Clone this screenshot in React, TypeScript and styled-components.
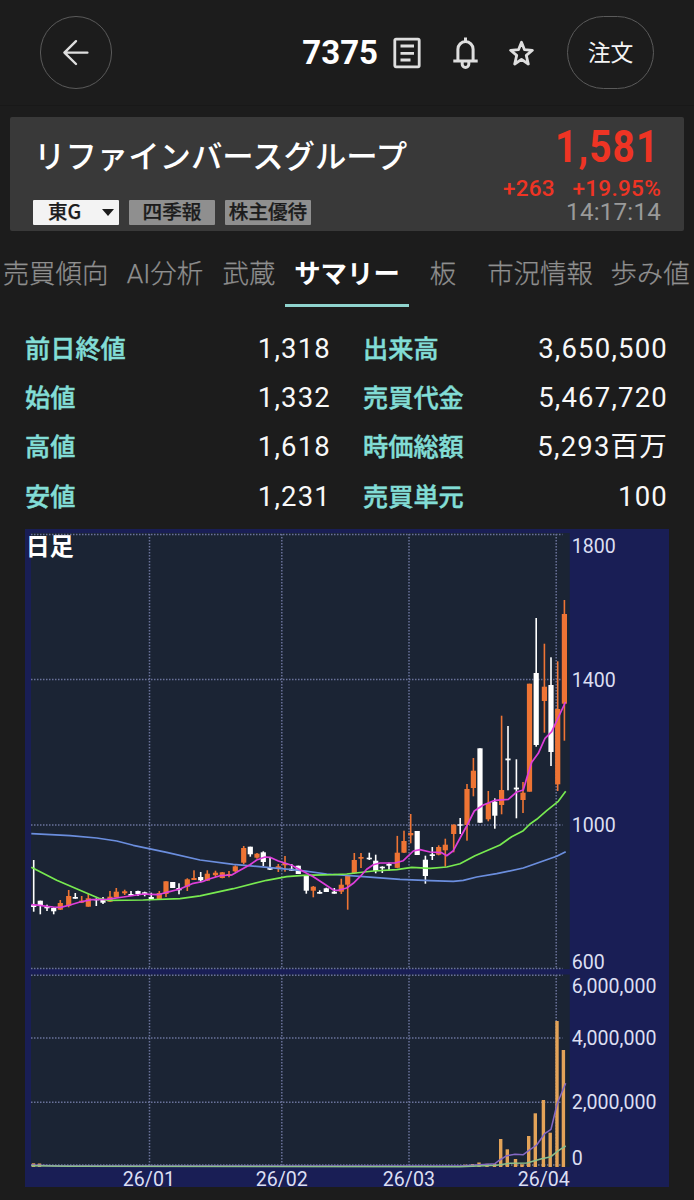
import React from "react";
import styled, { createGlobalStyle } from "styled-components";

const Global = createGlobalStyle`
  * { box-sizing: border-box; }
  body {
    margin: 0;
    background: #1c1c1c;
    color: #fff;
    font-family: Roboto, "Noto Sans CJK JP", sans-serif;
    overflow: hidden;
  }
`;

const Page = styled.main`
  width: 694px;
  height: 1200px;
  overflow: hidden;
  background: #1c1c1c;
`;

const Header = styled.header`
  display: flex;
  align-items: center;
  height: 106px;
  padding: 0 40px;
  border-bottom: 1px solid #181818;
`;

const RoundButton = styled.button<{ $w: number; $drop?: number }>`
  display: flex;
  align-items: center;
  justify-content: center;
  width: ${(p) => p.$w}px;
  height: 73px;
  padding: ${(p) => p.$drop ?? 0}px 0 0;
  border: 1px solid #5a5a5a;
  border-radius: 37px;
  background: transparent;
  color: #f4f4f4;
  font: 400 22.8px/1 Roboto, "Noto Sans CJK JP", sans-serif;
`;

const Code = styled.h1`
  margin: 0 15px 0 auto;
  font: 700 33px/40px Roboto, sans-serif;
`;

const Icon = styled.svg<{ $gap: number }>`
  display: block;
  flex: none;
  margin-right: ${(p) => p.$gap}px;
  fill: none;
  stroke: #dedede;
  stroke-linejoin: round;
`;

const Card = styled.section`
  display: flex;
  justify-content: space-between;
  height: 114px;
  margin: 11px 10px 0;
  padding: 0 23px;
  border-radius: 2px;
  background: #393939;
`;

const Names = styled.div`
  display: flex;
  flex-direction: column;
`;

const Company = styled.h2`
  margin: 16px 0 0 1px;
  height: 44px;
  font: 500 31.4px/44px "Noto Sans CJK JP", sans-serif;
`;

const Chips = styled.div`
  display: flex;
  gap: 10px;
  margin-top: 22.5px;
`;

const Chip = styled.span<{ $light?: boolean }>`
  display: flex;
  align-items: center;
  justify-content: ${(p) => (p.$light ? "space-between" : "center")};
  width: 86px;
  height: 25px;
  padding: ${(p) => (p.$light ? "0 5px 0 15px" : "0")};
  border-radius: 1px;
  background: ${(p) => (p.$light ? "#f3f3f3" : "#8f8f8f")};
  color: #1c1c1c;
  white-space: nowrap;
  font: 500 19.6px/22px "Noto Sans CJK JP", sans-serif;
  -webkit-text-stroke: 0.25px currentColor;
  & > b {
    height: 25px;
    font-weight: 500;
  }
`;

const Caret = styled.i`
  border: 6.5px solid transparent;
  border-top: 7px solid #1c1c1c;
  border-bottom: 0;
`;

const Quote = styled.div`
  display: flex;
  flex-direction: column;
  align-items: flex-end;
  color: #ee3424;
`;

const Price = styled.strong`
  margin: 7px 1.5px 0 0;
  font: 700 45px/46px Roboto, sans-serif;
  letter-spacing: 1.4px;
  transform: scaleX(0.86);
  transform-origin: 100% 50%;
`;

const Change = styled.div`
  display: flex;
  gap: 17.5px;
  margin-top: 6px;
  letter-spacing: 0.3px;
  font: 500 22.5px/24px Roboto, sans-serif;
`;

const Time = styled.time`
  color: #9a9a9a;
  letter-spacing: 0.2px;
  font: 400 24.2px/25px Roboto, sans-serif;
`;

const Tabs = styled.nav`
  display: flex;
  height: 76px;
  padding-top: 16px;
`;

const Tab = styled.a<{ $w: number; $active?: boolean }>`
  flex: none;
  width: ${(p) => p.$w}px;
  height: 60px;
  margin-left: ${(p) => (p.$active ? 6 : 0)}px;
  text-align: center;
  white-space: nowrap;
  color: ${(p) => (p.$active ? "#fff" : "#8f8f8f")};
  border-bottom: 3px solid ${(p) => (p.$active ? "#8fd3cd" : "transparent")};
  font: ${(p) => (p.$active ? 700 : 300)} 26.4px/54px Roboto, "Noto Sans CJK JP", sans-serif;
  -webkit-text-stroke: ${(p) => (p.$active ? 0 : 0.25)}px currentColor;
`;

const Summary = styled.dl`
  display: grid;
  grid-template-columns: 306px 305px;
  column-gap: 32px;
  grid-auto-rows: 49.3px;
  margin: 17px 0 0 25px;
  height: 205px;
`;

const Item = styled.div`
  display: flex;
  align-items: center;
  justify-content: space-between;
  white-space: nowrap;
`;

const Label = styled.dt`
  padding-bottom: 4px;
  color: #82ddd6;
  font: 500 25.2px/36px "Noto Sans CJK JP", sans-serif;
  -webkit-text-stroke: 0.45px currentColor;
`;

const Value = styled.dd`
  margin: 0;
  color: #f8f8f8;
  letter-spacing: 1.2px;
  font: 400 27.5px/40px Roboto, "Noto Sans CJK JP", sans-serif;
`;

const Chart = styled.svg`
  display: block;
  margin-left: 25px;
  overflow: visible;
  text {
    font: 400 19.6px Roboto, sans-serif;
    fill: #dcdff2;
  }
  text.title {
    font: 700 24px "Noto Sans CJK JP", sans-serif;
    fill: #fff;
  }
`;

// [direction, x, high, low, body top, body bottom] in chart coordinates
type Candle = ["u" | "d", number, number, number, number, number];
const candles: Candle[] = [
  ["d", 33.7, 860, 911.7, 905, 907], ["d", 40.3, 900.7, 914.3, 900.7, 905.3],
  ["d", 47, 904.7, 911, 906.3, 908.3], ["d", 53.7, 907.3, 914.3, 908, 911.3],
  ["u", 60.3, 900, 910, 903, 909.7], ["u", 68.7, 890, 907.3, 896, 905.7],
  ["d", 75.3, 893, 898.7, 897, 898.7], ["u", 81.7, 896, 903, 900.7, 902.7],
  ["u", 88.3, 894, 906.7, 898.3, 906.7], ["d", 96.3, 898.3, 906, 899, 900.3],
  ["d", 103, 897, 904, 900, 902.7], ["u", 110, 891, 902, 896.7, 901.7],
  ["u", 116.3, 888, 897.3, 891.7, 897.3], ["u", 124.7, 889.7, 895, 891.3, 893.3],
  ["d", 131, 891, 896, 894, 895.7], ["d", 138, 890.7, 896, 891, 894],
  ["d", 144.7, 891.7, 896.3, 892.3, 894], ["d", 151.3, 892.7, 899.3, 897, 899.3],
  ["u", 159.3, 891, 899.3, 893, 899], ["u", 166, 881.3, 897, 881.3, 894],
  ["d", 172.7, 882, 888, 882, 888], ["d", 179, 883.3, 894.3, 888, 890.3],
  ["u", 187.3, 878.3, 891, 879.3, 886.7], ["u", 194, 870.3, 880, 878, 880],
  ["d", 200.7, 872, 882.3, 877, 880.3], ["u", 207.3, 870.3, 881, 873.7, 880.7],
  ["u", 215.5, 870.7, 877, 872.7, 875.2], ["u", 222.3, 872, 878.3, 872.3, 878],
  ["u", 229, 871, 877.3, 874, 876], ["u", 235.3, 865.3, 872, 866.3, 871.3],
  ["u", 243.7, 846, 864.3, 848, 862.7], ["d", 250.3, 846.7, 856.7, 846.7, 854.3],
  ["u", 257, 853, 858.7, 853.7, 857.7], ["d", 263.3, 851.3, 866, 852.3, 862],
  ["d", 270, 857.7, 870, 867, 869.7], ["u", 278.3, 864, 872, 866.3, 869],
  ["u", 285, 856, 871.7, 863, 865.3], ["d", 291.7, 864, 871, 868.7, 870.7],
  ["d", 298.3, 865.7, 874, 865.7, 874], ["d", 306.3, 875, 893.7, 876, 890.7],
  ["u", 313.3, 886, 897.3, 886.7, 890.7], ["d", 319.7, 890.3, 893.7, 892, 893.7],
  ["d", 326.3, 887.7, 892, 888.3, 892], ["d", 334.3, 888, 893.7, 891.7, 893.7],
  ["u", 341.3, 878.7, 894, 884.7, 891.7], ["u", 347.7, 875, 909.7, 875.7, 884.7],
  ["u", 354.3, 853, 874, 860, 873.3], ["u", 361, 853, 868, 857, 858.7],
  ["d", 369.3, 852.7, 860, 857.7, 859.3], ["d", 375.7, 854.7, 873.3, 860.7, 871],
  ["d", 382.3, 866.3, 873, 866.7, 868.3], ["d", 389, 862.7, 870.7, 864, 865.7],
  ["u", 397.3, 835.9, 868, 852.7, 867.8], ["u", 404, 830.7, 853, 841, 852.7],
  ["u", 410.7, 814, 843.3, 833, 835.3], ["d", 417.2, 831, 855, 831, 855],
  ["d", 425.4, 855.7, 883.7, 859.7, 876], ["d", 432.3, 847, 860, 854.3, 856],
  ["u", 438.7, 845.3, 855.3, 847, 854.7], ["u", 445.3, 838.7, 866.7, 844.7, 850.3],
  ["u", 453.7, 824.3, 852.3, 824.7, 834], ["d", 460.2, 818, 834, 824.3, 825.7],
  ["u", 467, 784, 840.7, 789, 825], ["u", 473.4, 758, 796.3, 770.7, 788],
  ["d", 480, 748.3, 822.7, 748.3, 822.7], ["u", 488.3, 791, 821.3, 803, 819.3],
  ["d", 494.8, 798.3, 828.7, 801.7, 815.7], ["u", 501.6, 715.7, 814.3, 790, 805],
  ["d", 508, 726, 790.3, 758.5, 760.3], ["d", 516.4, 759.3, 818.3, 787.6, 789.4],
  ["u", 523, 782, 813, 792.7, 800], ["u", 529.5, 683.7, 791.7, 683.7, 791.7],
  ["d", 536.2, 618, 746.7, 673, 745], ["u", 544.4, 643.7, 732.7, 686.7, 701],
  ["d", 551, 657.3, 766, 685, 752], ["u", 557.7, 661.3, 791, 709, 784.3],
  ["u", 564.4, 600, 740.7, 614, 703.7],
];

const shortAverage =
  "31.3,904.7 40,905.3 46.7,906.3 53.3,907 60.7,907.3 70,905 80,902 91.7,899.7 106.7,899.3 123.3,897 143.3,894 151.7,894.3 158.3,894.7 166.7,892.3 180,889 193.3,883.3 203,881.5 208.3,879.3 220,875.7 231.7,875 240,870.3 250,864.7 256.7,860 265,857 270,857.3 278.3,861 291.7,865.3 300,869.7 313.3,876.7 323.3,883.3 333.3,890 338.3,890.3 346.7,888 353.3,883.3 360,876.7 366.7,869.3 373.3,864.7 380,863 395,863 403.3,860.7 413.3,851 420,849.7 430,852 441.7,852.7 446.7,855.7 453.3,850.7 461.7,835 466.7,826 474.3,811 483.3,805 495,800.3 508.3,799.3 516.7,792 523.3,790 526.7,778.3 531.7,762.3 538.3,753.3 545,738.3 551.7,731.7 558.3,717.5 565.5,702";
const midAverage =
  "31.3,867.3 56.7,880.3 80,890.3 100,898.7 108.3,900.3 143.3,900 180,898.7 200,895.8 233.3,888.7 266.7,880.3 286.7,876.7 303.3,875.3 333.3,874.7 346.7,874 373.3,871 396.7,869.7 411.7,867.3 430,868.3 446.7,867 460,863.7 475,855.7 500,845 511.7,836.7 523.3,830.7 530,824 536.7,819.3 546.7,810.7 558.3,801.3 565.7,791.3";
const longAverage =
  "31.3,833.7 70,835.7 96.7,838 116.7,841 133.3,845.3 166.7,852.3 200,860 233.3,864.3 270,867.7 300,870.3 326.7,874 360,876.3 400,879.3 430,880.7 453.3,881.3 463.3,880.3 476.7,877 496.7,873.7 523.3,868 546.7,859.7 556.7,856.3 565.7,851.7";

const volumes: [number, number][] = [
  [33.5, 1163.3], [39.5, 1163.5], [465.3, 1164.7], [472.6, 1164], [479, 1162.5], [487, 1163.8], [494.5, 1164],
  [500.7, 1139], [507.3, 1149.3], [515.5, 1159], [522, 1164.3], [528.7, 1136], [535.3, 1113.3],
  [543.4, 1100], [550.2, 1132.7], [557, 1021], [563.4, 1050],
];
const volumeShort =
  "31.3,1165 60,1166 460,1166 480,1164.7 495,1163.7 498.3,1161 506.7,1155.7 515,1154.3 523.3,1154.7 530,1149.7 536.7,1145 545,1133.3 551,1129.3 557.3,1103.3 565.7,1083.3";
const volumeLong =
  "31.3,1165.7 70,1166.3 460,1166.7 496.7,1165.3 510,1163.3 526.7,1163 541.7,1158.7 551,1156.7 558.3,1150.7 565.7,1146";

const priceLabels: [string, number][] = [
  ["1800", 552.5], ["1400", 687], ["1000", 832], ["600", 968.7],
  ["6,000,000", 993], ["4,000,000", 1044.7], ["2,000,000", 1109], ["0", 1165.3],
];
const dateLabels: [string, number][] = [["26/01", 148.9], ["26/02", 281.7], ["26/03", 408.9], ["26/04", 543.7]];

const rows = [
  ["前日終値", "1,318", "出来高", "3,650,500"],
  ["始値", "1,332", "売買代金", "5,467,720"],
  ["高値", "1,618", "時価総額", "5,293百万"],
  ["安値", "1,231", "売買単元", "100"],
];

const tabs: [string, number, boolean?][] = [
  ["売買傾向", 111], ["AI分析", 108], ["武蔵", 60], ["サマリー", 124, true],
  ["板", 68], ["市況情報", 126], ["歩み値", 94],
];

function PriceChart() {
  return (
    <Chart width="644" height="658" viewBox="25 529 644 658">
      <rect x="25" y="529" width="644" height="658" fill="#191e55" />
      <rect x="31" y="533" width="538.7" height="436" fill="#1b2434" />
      <rect x="31" y="974.5" width="538.7" height="192.5" fill="#1b2434" />
      <g stroke="#6a729a" strokeWidth="1.5" strokeDasharray="1.5 1.5">
        {[534.5, 679.6, 825, 968.6, 975.2, 1038, 1102.3, 1165].map((y) => (
          <line key={y} x1="31" x2="562.5" y1={y} y2={y} />
        ))}
        {[149.5, 281.8, 409, 556.2].map((x) => (
          <React.Fragment key={x}>
            <line x1={x} x2={x} y1="534" y2="969" />
            <line x1={x} x2={x} y1="975" y2="1166" />
          </React.Fragment>
        ))}
      </g>
      {candles.map(([dir, x, high, low, top, bottom]) => (
        <g key={x} fill={dir === "u" ? "#ee7434" : "#fff"}>
          <rect x={x - 0.8} y={high} width="1.6" height={low - high} />
          <rect x={x - 2.6} y={top} width="5.2" height={bottom - top} />
        </g>
      ))}
      <g fill="none" strokeWidth="1.7" strokeLinejoin="round">
        <polyline points={longAverage} stroke="#6b8ede" />
        <polyline points={midAverage} stroke="#78ea50" />
        <polyline points={shortAverage} stroke="#de3edb" />
      </g>
      {volumes.map(([x, y]) => (
        <rect key={x} x={x - 1.7} y={y} width="3.4" height={1167 - y} fill="#e3a358" />
      ))}
      <g fill="none" strokeWidth="1.5" strokeLinejoin="round">
        <polyline points={volumeShort} stroke="#8468c4" />
        <polyline points={volumeLong} stroke="#8cc08a" />
      </g>
      {priceLabels.map(([t, y]) => (
        <text key={t} x="571.7" y={y}>{t}</text>
      ))}
      {dateLabels.map(([t, x]) => (
        <text key={t} x={x} y="1185.7" textAnchor="middle">{t}</text>
      ))}
      <text className="title" x="25.8" y="555">日足</text>
    </Chart>
  );
}

export default function App() {
  return (
    <Page>
      <Global />
      <Header>
        <RoundButton $w={72} aria-label="戻る">
          <Icon $gap={0} width="28" height="28" strokeWidth="2.4" strokeLinecap="round">
            <path d="M25.4 13.6H2.4M14 2.2L2.4 13.6L14 25" />
          </Icon>
        </RoundButton>
        <Code>7375</Code>
        <Icon $gap={32} width="28" height="32" strokeWidth="2.8">
          <rect x="1.8" y="2.2" width="24.4" height="27.6" rx="1.2" />
          <path d="M7.5 9H21M7.5 16.3H21M7.5 23H17.5" />
        </Icon>
        <Icon $gap={31} width="25" height="34" strokeWidth="3">
          <path d="M12.5 1.5V5M4.9 24.8V13.2A7.6 7.6 0 0 1 20.1 13.2V24.8M0.3 25H24.7M9.2 25.5V28.2A3.3 3.3 0 0 0 15.8 28.2V25.5" />
        </Icon>
        <Icon $gap={33} width="25" height="26" strokeWidth="2.8">
          <path d="M12.5 2.2L15.4 9.6L23.4 10.3L17.3 15.4L19.3 24L12.5 19.4L5.7 24L7.7 15.4L1.6 10.3L9.6 9.6Z" />
        </Icon>
        <RoundButton $w={87} $drop={4}>注文</RoundButton>
      </Header>
      <Card>
        <Names>
          <Company>リファインバースグループ</Company>
          <Chips>
            <Chip $light>
              <b>東G</b>
              <Caret />
            </Chip>
            <Chip><b>四季報</b></Chip>
            <Chip><b>株主優待</b></Chip>
          </Chips>
        </Names>
        <Quote>
          <Price>1,581</Price>
          <Change>
            <span>+263</span>
            <span>+19.95%</span>
          </Change>
          <Time>14:17:14</Time>
        </Quote>
      </Card>
      <Tabs>
        {tabs.map(([name, w, active]) => (
          <Tab key={name} $w={w} $active={active}>{name}</Tab>
        ))}
      </Tabs>
      <Summary>
        {rows.flatMap(([a, b, c, d]) => [
          <Item key={a}><Label>{a}</Label><Value>{b}</Value></Item>,
          <Item key={c}><Label>{c}</Label><Value>{d}</Value></Item>,
        ])}
      </Summary>
      <PriceChart />
    </Page>
  );
}
